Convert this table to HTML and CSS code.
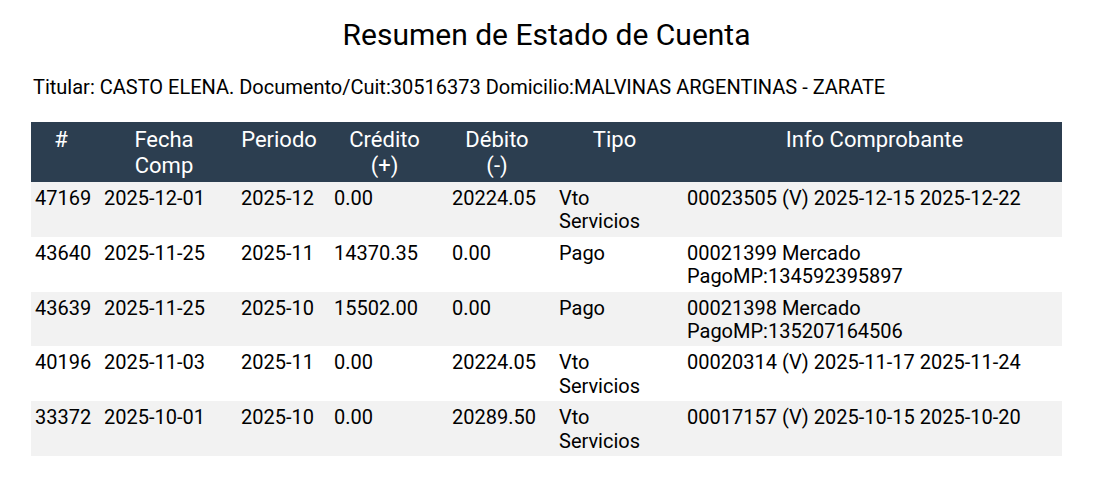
FILE: index.html
```html
<!DOCTYPE html>
<html lang="es">
<head>
<meta charset="utf-8">
<title>Resumen de Estado de Cuenta</title>
<link rel="stylesheet" href="styles.css">
</head>
<body>
<div class="page">
  <h1 class="title">Resumen de Estado de Cuenta</h1>
  <p class="holder">Titular: CASTO ELENA. Documento/Cuit:30516373 Domicilio:MALVINAS ARGENTINAS - ZARATE</p>
  <table class="ledger">
    <colgroup>
      <col class="c-num"><col class="c-date"><col class="c-period"><col class="c-credit"><col class="c-debit"><col class="c-type"><col class="c-info">
    </colgroup>
    <thead>
      <tr>
        <th>#</th>
        <th>Fecha<br>Comp</th>
        <th>Periodo</th>
        <th>Crédito<br>(+)</th>
        <th>Débito<br>(-)</th>
        <th>Tipo</th>
        <th class="th-info">Info Comprobante</th>
      </tr>
    </thead>
    <tbody>
      <tr>
        <td>47169</td><td>2025-12-01</td><td>2025-12</td><td>0.00</td><td>20224.05</td><td>Vto<br>Servicios</td><td>00023505 (V) 2025-12-15 2025-12-22</td>
      </tr>
      <tr>
        <td>43640</td><td>2025-11-25</td><td>2025-11</td><td>14370.35</td><td>0.00</td><td>Pago</td><td>00021399 Mercado<br>PagoMP:134592395897</td>
      </tr>
      <tr>
        <td>43639</td><td>2025-11-25</td><td>2025-10</td><td>15502.00</td><td>0.00</td><td>Pago</td><td>00021398 Mercado<br>PagoMP:135207164506</td>
      </tr>
      <tr>
        <td>40196</td><td>2025-11-03</td><td>2025-11</td><td>0.00</td><td>20224.05</td><td>Vto<br>Servicios</td><td>00020314 (V) 2025-11-17 2025-11-24</td>
      </tr>
      <tr>
        <td>33372</td><td>2025-10-01</td><td>2025-10</td><td>0.00</td><td>20289.50</td><td>Vto<br>Servicios</td><td>00017157 (V) 2025-10-15 2025-10-20</td>
      </tr>
    </tbody>
  </table>
</div>
</body>
</html>
```
FILE: styles.css
```css
html, body {
  margin: 0;
  padding: 0;
  background: #ffffff;
}

body {
  font-family: Roboto, "Liberation Sans", Arial, sans-serif;
  color: #000000;
}

.page {
  width: 1031px;
  margin-left: 31px;
  padding-top: 17px;
}

.title {
  margin: 0;
  font-size: 30px;
  font-weight: 400;
  line-height: 35px;
  text-align: center;
}

.holder {
  margin: 24px 0 0 2px;
  font-size: 20px;
  line-height: 23px;
}

.ledger {
  margin-top: 23px;
  width: 1031px;
  border-collapse: collapse;
  table-layout: fixed;
  font-size: 20px;
  line-height: 23.4px;
}

.c-num { width: 69px; }
.c-date { width: 137px; }
.c-period { width: 93px; }
.c-credit { width: 118px; }
.c-debit { width: 107px; }
.c-type { width: 128px; }
.c-info { width: 379px; }

.ledger thead tr {
  background: #2c3e50;
}

.ledger th {
  color: #ffffff;
  font-size: 22px;
  font-weight: 400;
  line-height: 25.5px;
  text-align: center;
  vertical-align: top;
  padding: 5px 9px 4px 0;
}

.ledger th.th-info {
  padding: 5px 0 4px 4px;
}

.ledger td {
  vertical-align: top;
  text-align: left;
  padding: 5px 4px 3px 4px;
}

.ledger tbody tr:nth-child(odd) {
  background: #f2f2f2;
}

.ledger tbody tr:nth-child(even) {
  background: #ffffff;
}
```
